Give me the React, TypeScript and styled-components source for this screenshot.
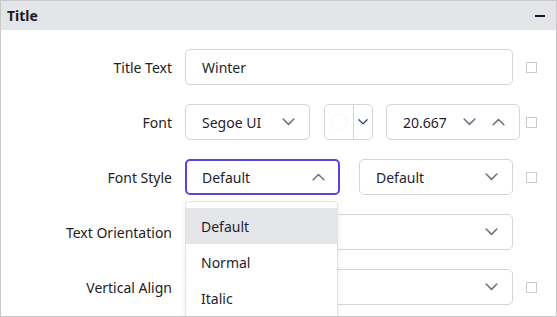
import React from "react";
import styled, { createGlobalStyle } from "styled-components";

const GlobalStyle = createGlobalStyle`
  html, body {
    margin: 0;
    padding: 0;
    background: #ffffff;
    font-family: "Noto Sans", "Open Sans", sans-serif;
  }
`;

const Panel = styled.div`
  width: 557px;
  height: 317px;
  box-sizing: border-box;
  border: 1px solid #c8c8c8;
  overflow: hidden;
  background: #ffffff;
`;

const Header = styled.div`
  height: 29px;
  background: #e4e5e8;
  display: flex;
  align-items: center;
  justify-content: space-between;
  padding: 0 11px 0 6px;
  font-size: 14px;
  font-weight: 700;
  color: #1b1b1b;
`;

const Minus = styled.div`
  width: 10px;
  height: 1.5px;
  background: #111827;
  margin-top: 1px;
`;

const Body = styled.div`
  display: grid;
  grid-template-columns: 171px 328px 11px;
  column-gap: 13px;
  row-gap: 19px;
  padding-top: 19px;
  align-items: center;
`;

const Label = styled.div`
  text-align: right;
  font-size: 14px;
  color: #222;
`;

const Controls = styled.div<{ $gap?: number }>`
  display: flex;
  gap: ${(p) => p.$gap ?? 14}px;
  position: relative;
`;

const Field = styled.div<{ $w?: number; $focus?: boolean; $pull?: boolean }>`
  height: 36px;
  box-sizing: border-box;
  flex: ${(p) => (p.$w ? `0 0 ${p.$w}px` : "1 1 auto")};
  margin-left: ${(p) => (p.$pull ? -1 : 0)}px;
  border: ${(p) => (p.$focus ? "2px solid #5646e0" : "1px solid #d4d5da")};
  border-radius: 5px;
  display: flex;
  align-items: center;
  padding: 0 ${(p) => (p.$focus ? 13 : 14)}px 0 ${(p) => (p.$focus ? 15 : 16)}px;
  font-size: 14px;
  color: #1f2330;
  gap: 16px;
`;

const Value = styled.span`
  flex: 1;
`;

const ColorBox = styled.div`
  flex: 0 0 49px;
  height: 36px;
  box-sizing: border-box;
  border: 1px solid #d4d5da;
  border-radius: 5px;
  display: flex;
`;

const Swatch = styled.div`
  width: 28px;
  border-right: 1px solid #d4d5da;
  display: flex;
  align-items: center;
  justify-content: center;
`;

const SwatchArrow = styled.div`
  flex: 1;
  display: flex;
  align-items: center;
  justify-content: center;
`;

const Check = styled.div`
  width: 11px;
  height: 11px;
  box-sizing: border-box;
  border: 1px solid #c9cbd0;
`;

const Menu = styled.div`
  position: absolute;
  left: 0;
  top: 42px;
  width: 153px;
  box-sizing: border-box;
  padding-top: 6px;
  background: #ffffff;
  border: 1px solid #e2e3e6;
  border-radius: 4px 4px 0 0;
  box-shadow: 0 2px 6px rgba(0, 0, 0, 0.08);
  z-index: 2;
`;

const Item = styled.div<{ $active?: boolean }>`
  height: 36px;
  display: flex;
  align-items: center;
  padding-left: 15px;
  font-size: 14px;
  color: #1f2330;
  background: ${(p) => (p.$active ? "#e5e6e9" : "transparent")};
`;

const Chevron = ({ up, color = "#6b7280", w = 13 }: { up?: boolean; color?: string; w?: number }) => (
  <svg width={w} height={w * 0.6} viewBox="0 0 13 8" fill="none">
    <path
      d={up ? "M1 7 L6.5 1.5 L12 7" : "M1 1 L6.5 6.5 L12 1"}
      stroke={color}
      strokeWidth="1.6"
      strokeLinecap="round"
      strokeLinejoin="round"
    />
  </svg>
);

export default function App() {
  return (
    <>
      <GlobalStyle />
      <Panel>
        <Header>
          <span>Title</span>
          <Minus />
        </Header>
        <Body>
          <Label>Title Text</Label>
          <Controls>
            <Field>
              <Value>Winter</Value>
            </Field>
          </Controls>
          <Check />

          <Label>Font</Label>
          <Controls>
            <Field $w={125}>
              <Value>Segoe UI</Value>
              <Chevron />
            </Field>
            <ColorBox>
              <Swatch>
                <svg width="20" height="20" viewBox="0 0 20 20">
                  <circle cx="10" cy="10" r="8" fill="none" stroke="#f6f6f8" strokeWidth="1" />
                </svg>
              </Swatch>
              <SwatchArrow>
                <Chevron color="#1e3a66" w={10} />
              </SwatchArrow>
            </ColorBox>
            <Field $pull>
              <Value>20.667</Value>
              <Chevron />
              <Chevron up />
            </Field>
          </Controls>
          <Check />

          <Label>Font Style</Label>
          <Controls $gap={19}>
            <Field $w={155} $focus>
              <Value>Default</Value>
              <Chevron up />
            </Field>
            <Field>
              <Value>Default</Value>
              <Chevron />
            </Field>
            <Menu>
              <Item $active>Default</Item>
              <Item>Normal</Item>
              <Item>Italic</Item>
            </Menu>
          </Controls>
          <Check />

          <Label>Text Orientation</Label>
          <Controls>
            <Field>
              <Value />
              <Chevron />
            </Field>
          </Controls>
          <span />

          <Label>Vertical Align</Label>
          <Controls>
            <Field>
              <Value />
              <Chevron />
            </Field>
          </Controls>
          <Check />
        </Body>
      </Panel>
    </>
  );
}
